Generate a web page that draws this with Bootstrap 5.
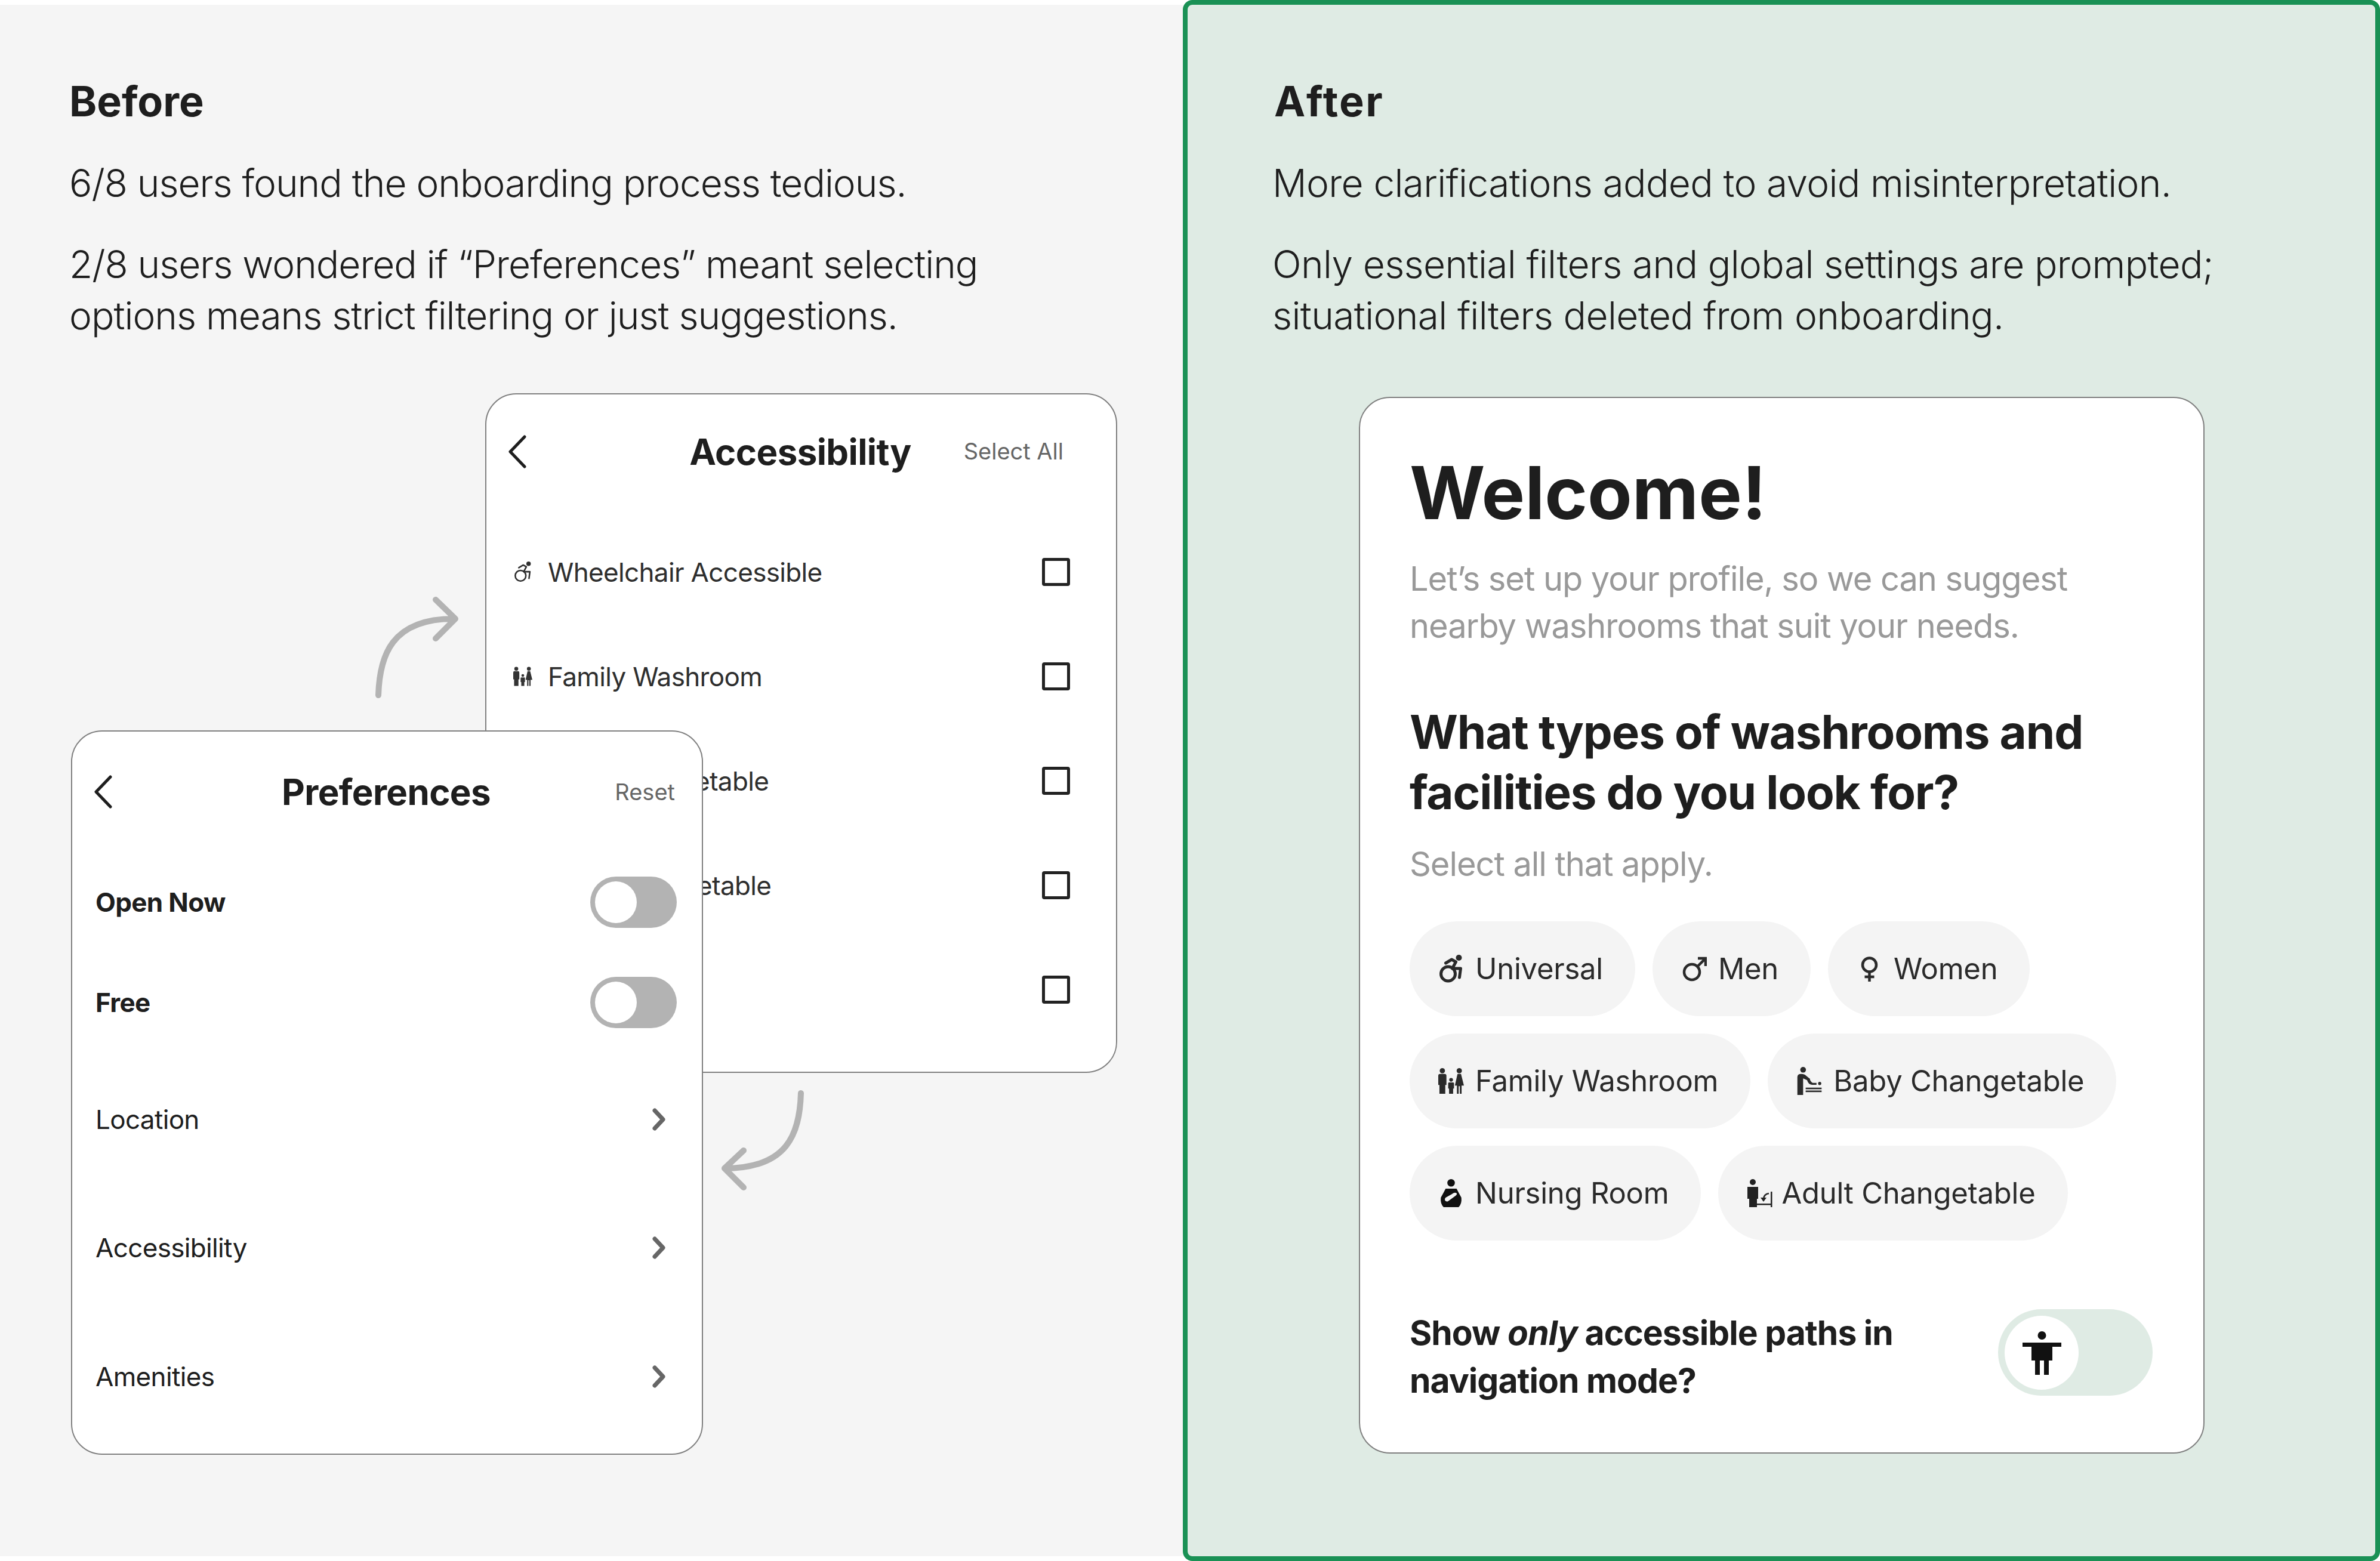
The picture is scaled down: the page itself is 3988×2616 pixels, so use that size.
<!DOCTYPE html>
<html lang="en">
<head>
    <meta charset="UTF-8">
    <meta name="viewport" content="width=device-width, initial-scale=1.0">
    <title>Before and After</title>
    <link rel="stylesheet" href="https://cdn.jsdelivr.net/npm/bootstrap@5.3.3/dist/css/bootstrap.min.css">
    <style>
        body { width: 3988px; height: 2616px; background: #fff; font-family: Inter, "Liberation Sans", sans-serif; color: #1e1e1e; overflow: hidden; }
        .compare { width: 3988px; height: 2616px; }
        .before-panel { width: 1982px; height: 2600px; margin-top: 8px; padding: 122px 100px 0 116px; background: #f5f5f5; position: relative; flex: none; }
        .after-panel { width: 2006px; height: 2616px; border: 8px solid #1a9155; border-radius: 16px; background: #dfebe4; padding: 122px 0 0 142px; flex: none; }
        .panel-title { font-size: 70px; line-height: 80px; font-weight: 700; margin: 0 0 54px; }
        .after-panel .panel-title { letter-spacing: 0.035em; padding-left: 3px; }
        .panel-text { font-size: 64px; line-height: 86px; font-weight: 300; letter-spacing: -0.016em; margin: 0 0 50px; white-space: nowrap; }
        .after-panel .panel-text { letter-spacing: -0.01em; }

        .phone-card { position: absolute; background: #fff; border: 2px solid #808080; border-radius: 52px; }
        .access-card { left: 813px; top: 651px; width: 1059px; height: 1139px; padding: 0 77px 0 47px; }
        .prefs-card { left: 119px; top: 1216px; width: 1059px; height: 1214px; padding: 0 42px 0 39px; }
        .card-head { display: grid; grid-template-columns: 1fr auto 1fr; align-items: center; }
        .access-card .card-head { height: 191px; margin: 0 -37px 19px -10px; }
        .prefs-card .card-head { height: 202px; }
        .prefs-card .card-head svg { margin-left: -2px; }
        .card-head h3 { font-size: 60px; font-weight: 700; margin: 0; letter-spacing: -0.01em; }
        .head-link { font-size: 38px; color: #666; text-align: right; }
        .access-card .head-link { padding-right: 48px; }
        .prefs-card .head-link { padding-right: 3px; }
        .access-row { --wheel-line: 3.4; height: 175px; font-size: 44px; color: #2e2e2e; letter-spacing: -0.015em; }
        .access-row svg { width: 32px; height: 35px; flex: none; margin-left: -2px; }
        .access-row .row-label { margin-left: 26px; white-space: nowrap; }
        .wheel-line { stroke-width: var(--wheel-line, 5); }
        .tick-box { width: 47px; height: 47px; border: 5px solid #222; border-radius: 4px; flex: none; }
        .pref-row { height: 168px; font-size: 44px; font-weight: 700; letter-spacing: -0.015em; }
        .link-row { height: 215.5px; font-size: 44px; letter-spacing: -0.015em; }
        .pref-row + .link-row { margin-top: 4px; }
        .pref-switch { width: 145px; height: 86px; border-radius: 43px; background: #b3b3b3; padding: 8px; }
        .pref-switch span { display: block; width: 70px; height: 70px; border-radius: 50%; background: #fff; }
        .go-chevron { margin-right: 19px; fill: none; stroke: #666; stroke-width: 7; stroke-linecap: round; stroke-linejoin: round; }
        .curve-arrow { position: absolute; fill: none; stroke: #b3b3b3; stroke-width: 10; stroke-linecap: round; stroke-linejoin: round; }

        .welcome-card { width: 1417px; height: 1771px; margin: 93px 0 0 145px; background: #fff; border: 2px solid #808080; border-radius: 52px; padding: 94px 85px 0 83px; }
        .welcome-card h1 { font-size: 122px; line-height: 130px; font-weight: 700; margin: 0 0 40px; }
        .muted-text { font-size: 56px; line-height: 79px; color: #999; letter-spacing: -0.019em; margin: 0; white-space: nowrap; }
        .welcome-card h2 { font-size: 78px; line-height: 101px; font-weight: 700; letter-spacing: -0.015em; margin: 87px 0 31px; white-space: nowrap; }
        .chip-wrap { margin-top: 56px; gap: 29px; }
        .type-chip { height: 159px; background: #f4f4f4; border-radius: 80px; padding: 0 54px 0 48px; font-size: 49px; letter-spacing: -0.005em; color: #2a2a2a; gap: 19px; white-space: nowrap; }
        .type-chip.chip-tight { gap: 15px; }
        .chip-icon { width: 43px; height: 47px; flex: none; }
        .toggle-row { margin-top: 115px; }
        .toggle-row p { font-size: 57px; line-height: 80px; font-weight: 700; letter-spacing: -0.017em; margin: 0; white-space: nowrap; }
        .path-switch { width: 259px; height: 145px; border-radius: 73px; background: #dfebe4; padding: 11px; flex: none; }
        .path-switch span { width: 124px; height: 124px; border-radius: 50%; background: #fff; }
    </style>
</head>
<body>
    <svg width="0" height="0" class="position-absolute">
        <symbol id="ic-wheel" viewBox="0 0 38 47">
            <circle class="wheel-line" cx="14" cy="32" r="12" fill="none" stroke="currentColor"/>
            <circle cx="32" cy="5" r="5" fill="currentColor"/>
            <path class="wheel-line" d="M10 14 L20 8 L27 12 L21 23 L35 23 L33 38" fill="none" stroke="currentColor" stroke-linejoin="round" stroke-linecap="round"/>
        </symbol>
        <symbol id="ic-family" viewBox="0 0 44 44">
            <circle cx="7" cy="4.5" r="4.5"/><path d="M0 13 Q0 10 3 10 H11 Q14 10 14 13 V29 H12 V44 H2 V29 H0 Z"/>
            <circle cx="22" cy="20" r="3.2"/><path d="M17 26 Q17 24.500 19 24.500 H25 Q27 24.500 27 26 V35 H25.500 V44 H18.500 V35 H17 Z"/>
            <circle cx="36" cy="4.500" r="4.500"/><path d="M33 10 H39 L44 30 H40 V44 H37 V31 H35 V44 H32 V30 H28.500 Z"/>
        </symbol>
        <symbol id="ic-baby" viewBox="0 0 39 44">
            <circle cx="10" cy="4.500" r="4.500"/>
            <path d="M1 44 V16 Q1 11 7 11 Q12 11 15 14 L21 19 L19 22 L10 18 V44 Z"/>
            <path d="M16 20 Q18 28 24 28 H31 V25 H25 Q22 24 20 18 Z"/><circle cx="36" cy="26" r="2.500"/>
            <rect x="14" y="32.500" width="25" height="2.500"/><rect x="14" y="37" width="25" height="2.500"/>
        </symbol>
        <symbol id="ic-nursing" viewBox="0 0 32 41">
            <circle cx="16" cy="5.500" r="5.500"/>
            <path fill-rule="evenodd" d="M8 14 H24 Q27 20 31 27 Q32 36 27 41 H5 Q0 36 1 27 Q5 20 8 14 Z M7 31 Q9 34 12 32 L23 24 Q26 21 23 20 Q20 19 17 22 L8 27 Q6 29 7 31 Z"/>
        </symbol>
        <symbol id="ic-adult" viewBox="0 0 43 47">
            <circle cx="10" cy="5" r="5"/>
            <path d="M1 13 H19 V33 H17 V47 H4 V33 H1 Z"/>
            <rect x="40" y="21" width="2.500" height="26"/><rect x="17" y="41" width="24" height="2.500"/>
            <path d="M37 24 Q29 25 28 33" fill="none" stroke="currentColor" stroke-width="2.500"/><path d="M23 31 H33 L28 38 Z"/>
        </symbol>
        <symbol id="ic-men" viewBox="0 0 43 47">
            <circle cx="18" cy="29" r="13" fill="none" stroke="currentColor" stroke-width="4.500"/>
            <path d="M27 20 L40 7 M28 6 H41 V19" fill="none" stroke="currentColor" stroke-width="4.500"/>
        </symbol>
        <symbol id="ic-women" viewBox="0 0 43 47">
            <circle cx="21.500" cy="17" r="11.500" fill="none" stroke="currentColor" stroke-width="4.500"/>
            <path d="M21.500 29 V45 M13.500 37 H29.500" fill="none" stroke="currentColor" stroke-width="4.500"/>
        </symbol>
    </svg>

    <main class="compare d-flex align-items-start">
        <section class="before-panel">
            <h2 class="panel-title">Before</h2>
            <p class="panel-text">6/8 users found the onboarding process tedious.</p>
            <p class="panel-text">2/8 users wondered if “Preferences” meant selecting<br>options means strict filtering or just suggestions.</p>

            <div class="phone-card access-card">
                <div class="card-head">
                    <svg width="30" height="56" viewBox="0 0 30 56" fill="none" stroke="#1e1e1e" stroke-width="5" stroke-linecap="round" stroke-linejoin="round"><path d="M27 3 L3 28 L27 53"/></svg>
                    <h3>Accessibility</h3>
                    <div class="head-link">Select All</div>
                </div>
                <div class="access-row d-flex align-items-center justify-content-between">
                    <div class="d-flex align-items-center"><svg><use href="#ic-wheel"/></svg><span class="row-label">Wheelchair Accessible</span></div>
                    <span class="tick-box"></span>
                </div>
                <div class="access-row d-flex align-items-center justify-content-between">
                    <div class="d-flex align-items-center"><svg fill="#333"><use href="#ic-family"/></svg><span class="row-label">Family Washroom</span></div>
                    <span class="tick-box"></span>
                </div>
                <div class="access-row d-flex align-items-center justify-content-between">
                    <div class="d-flex align-items-center"><svg fill="#333"><use href="#ic-baby"/></svg><span class="row-label">Baby Changetable</span></div>
                    <span class="tick-box"></span>
                </div>
                <div class="access-row d-flex align-items-center justify-content-between">
                    <div class="d-flex align-items-center"><svg fill="#333"><use href="#ic-adult"/></svg><span class="row-label">Adult Changetable</span></div>
                    <span class="tick-box"></span>
                </div>
                <div class="access-row d-flex align-items-center justify-content-end">
                    <span class="tick-box"></span>
                </div>
            </div>

            <svg class="curve-arrow" style="left:600px;top:972px" width="200" height="200" viewBox="0 0 200 200"><path d="M34 185 C36 120 55 57 160 57 M130 25 L163 57 L130 90"/></svg>
            <svg class="curve-arrow" style="left:1190px;top:1802px" width="170" height="200" viewBox="0 0 170 200"><path d="M152 22 C150 90 130 148 24 148 M56 118 L24 148 L56 180"/></svg>

            <div class="phone-card prefs-card">
                <div class="card-head">
                    <svg width="30" height="56" viewBox="0 0 30 56" fill="none" stroke="#1e1e1e" stroke-width="5" stroke-linecap="round" stroke-linejoin="round"><path d="M27 3 L3 28 L27 53"/></svg>
                    <h3>Preferences</h3>
                    <div class="head-link">Reset</div>
                </div>
                <div class="pref-row d-flex align-items-center justify-content-between">
                    <span>Open Now</span>
                    <div class="pref-switch"><span></span></div>
                </div>
                <div class="pref-row d-flex align-items-center justify-content-between">
                    <span>Free</span>
                    <div class="pref-switch"><span></span></div>
                </div>
                <div class="link-row d-flex align-items-center justify-content-between">
                    <span>Location</span>
                    <svg class="go-chevron" width="22" height="38" viewBox="0 0 22 38"><path d="M4 4 L18 19 L4 34"/></svg>
                </div>
                <div class="link-row d-flex align-items-center justify-content-between">
                    <span>Accessibility</span>
                    <svg class="go-chevron" width="22" height="38" viewBox="0 0 22 38"><path d="M4 4 L18 19 L4 34"/></svg>
                </div>
                <div class="link-row d-flex align-items-center justify-content-between">
                    <span>Amenities</span>
                    <svg class="go-chevron" width="22" height="38" viewBox="0 0 22 38"><path d="M4 4 L18 19 L4 34"/></svg>
                </div>
            </div>
        </section>

        <section class="after-panel">
            <h2 class="panel-title">After</h2>
            <p class="panel-text">More clarifications added to avoid misinterpretation.</p>
            <p class="panel-text">Only essential filters and global settings are prompted;<br>situational filters deleted from onboarding.</p>

            <div class="welcome-card">
                <h1>Welcome!</h1>
                <p class="muted-text">Let’s set up your profile, so we can suggest<br>nearby washrooms that suit your needs.</p>
                <h2>What types of washrooms and<br>facilities do you look for?</h2>
                <p class="muted-text">Select all that apply.</p>
                <div class="chip-wrap d-flex flex-wrap">
                    <div class="type-chip d-flex align-items-center"><svg class="chip-icon"><use href="#ic-wheel"/></svg>Universal</div>
                    <div class="type-chip d-flex align-items-center"><svg class="chip-icon"><use href="#ic-men"/></svg>Men</div>
                    <div class="type-chip d-flex align-items-center"><svg class="chip-icon"><use href="#ic-women"/></svg>Women</div>
                    <div class="type-chip d-flex align-items-center"><svg class="chip-icon" fill="#2a2a2a"><use href="#ic-family"/></svg>Family Washroom</div>
                    <div class="type-chip d-flex align-items-center"><svg class="chip-icon" fill="#2a2a2a"><use href="#ic-baby"/></svg>Baby Changetable</div>
                    <div class="type-chip d-flex align-items-center"><svg class="chip-icon" fill="#111"><use href="#ic-nursing"/></svg>Nursing Room</div>
                    <div class="type-chip chip-tight d-flex align-items-center"><svg class="chip-icon" fill="#222"><use href="#ic-adult"/></svg>Adult Changetable</div>
                </div>
                <div class="toggle-row d-flex align-items-start justify-content-between">
                    <p>Show <em>only</em> accessible paths in<br>navigation mode?</p>
                    <div class="path-switch d-flex">
                        <span class="d-flex align-items-center justify-content-center">
                            <svg width="65" height="73" viewBox="0 0 65 73" fill="#111"><circle cx="32.500" cy="7" r="7"/><path d="M0 19 H65 V26 H50 V49 H44 V73 H36 V49 H29 V73 H21 V49 H15 V26 H0 Z"/></svg>
                        </span>
                    </div>
                </div>
            </div>
        </section>
    </main>
    <script src="https://cdn.jsdelivr.net/npm/bootstrap@5.3.3/dist/js/bootstrap.bundle.min.js"></script>
</body>
</html>
